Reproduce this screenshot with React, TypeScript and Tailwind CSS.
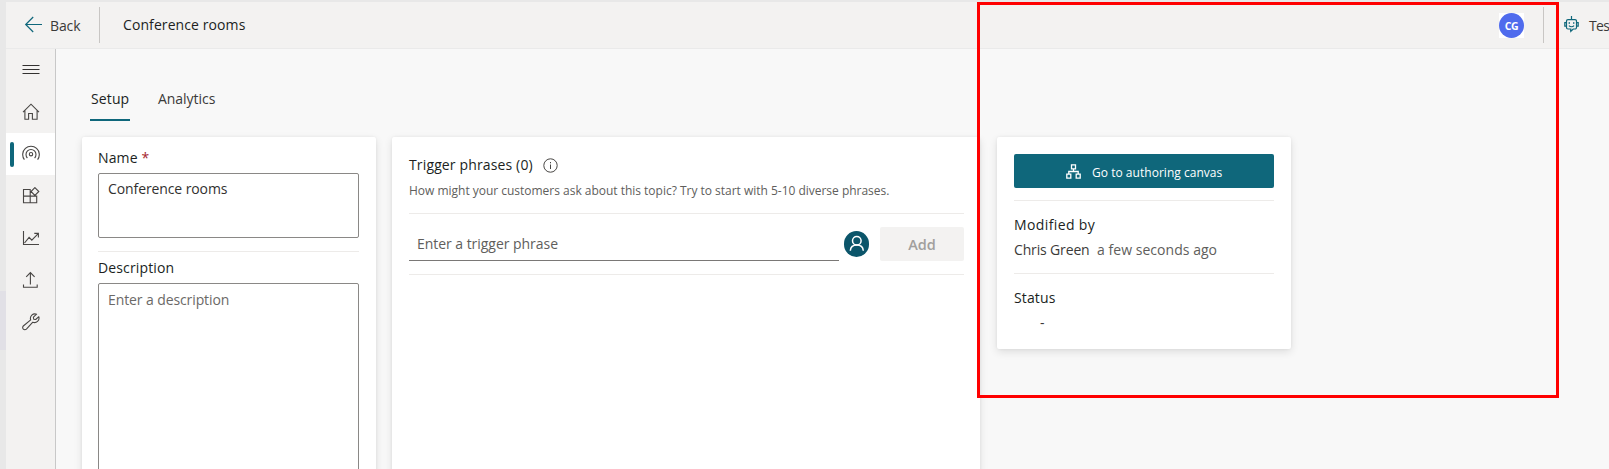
import React from "react";

type IconProps = { children: React.ReactNode };

function NavIcon({ children }: IconProps) {
  return (
    <svg width="18" height="18" viewBox="0 0 18 18" fill="none" stroke="#484644" strokeWidth="1.1">
      {children}
    </svg>
  );
}

const navIcons: { name: string; icon: React.ReactNode }[] = [
  { name: "menu", icon: <path d="M.5 4.5h17M.5 8.5h17M.5 12.5h17" stroke="#323130" /> },
  { name: "home", icon: <path d="M1 9.2 9 1.2l8 8M2.9 7.4v8.8h3.7v-5.7h3.8v5.7h4.7V7.4" /> },
  {
    name: "topics",
    icon: (
      <>
        <circle cx="9" cy="9.2" r="1.7" />
        <path d="M5.4 13a5 5 0 1 1 7.2 0M2.4 14.6a8.3 8.3 0 1 1 13.2 0" />
      </>
    ),
  },
  {
    name: "entities",
    icon: <path d="M1.5 2.5h6.7v13.2H1.5zM1.5 9.1h13.2v6.6H8.2V9.1M12.9.6l3.9 3.9-3.9 3.9L9 4.5z" />,
  },
  { name: "analytics", icon: <path d="M1.5 2v13.5H17M2.5 14l4.6-5.6 2.7 2.8 6.4-6.5M12.3 4.4h4.1v4.1" /> },
  { name: "publish", icon: <path d="M1.5 13.5v2.8h13.7v-2.8M8.4 13.6V1.5M4.2 5.8l4.2-4.3 4.2 4.3" /> },
  {
    name: "manage",
    icon: (
      <path
        d="M14.6 1.2a4.5 4.5 0 0 0-5.9 5.7L1.3 13a2.1 2.1 0 0 0 3.1 3.1l6.4-6.9a4.5 4.5 0 0 0 6-5.5l-3.1 2.8-2-.3-.3-2z"
        strokeLinejoin="round"
      />
    ),
  },
];

function Divider({ className }: { className: string }) {
  return <div className={`h-px shrink-0 bg-[#edebe9] ${className}`} />;
}

const card = "rounded-[2px] bg-white shadow-[0_3px_8px_rgba(0,0,0,0.11),0_0_3px_rgba(0,0,0,0.06)]";
const heading = "text-sm/5 font-medium tracking-[0.14px] text-[#201f1e]";

export default function App() {
  return (
    <div className="relative flex h-[469px] w-[1609px] overflow-hidden bg-[#e8e8e8] pt-[2px] font-['Open_Sans','Noto_Sans',sans-serif] text-sm/5 tracking-[-0.04px] whitespace-nowrap text-[#3b3a39]">
      <div className="flex w-1.5 shrink-0 flex-col">
        <div className="mt-[289px] h-[59px] bg-[#e1e0e6]" />
      </div>

      <div className="flex min-w-0 flex-1 flex-col bg-[#f8f8f8]">
        <header className="flex h-[47px] shrink-0 items-start border-b border-[#eaeaea] bg-[#f3f2f1]">
          <svg className="mt-[14px] ml-[18px]" width="18" height="17" viewBox="0 0 18 17" fill="none" stroke="#0f677b" strokeWidth="1.2">
            <path d="M18 8.5H1.5M9.2 1 1.7 8.5 9.2 16" />
          </svg>
          <span className="mt-[14px] ml-2 w-[49px] tracking-[-0.1px]">Back</span>
          <div className="mt-[5px] h-9 w-px bg-[#c8c6c4]" />
          <span className="mt-[13px] ml-[23px] font-medium tracking-[0.09px] text-[#201f1e]">Conference rooms</span>
          <div className="mt-[11px] ml-auto flex size-[25px] items-center justify-center bg-white">
            <div className="flex size-[25px] items-center justify-center rounded-full bg-[#4f6bed] text-[10.5px] font-bold tracking-[-0.3px] text-white">CG</div>
          </div>
          <div className="mt-[5px] ml-[19px] h-9 w-px bg-[#c8c6c4]" />
          <svg className="mt-[14px] ml-5" width="15" height="17" viewBox="0 0 15 17" fill="none" stroke="#0f677b" strokeWidth="1.2">
            <path d="M7.5 0v3.5M4 3.6h7a1.5 1.5 0 0 1 1.5 1.5v6.4A1.5 1.5 0 0 1 11 13H9.2l-2.4 2.4V13H4a1.5 1.5 0 0 1-1.5-1.5V5.1A1.5 1.5 0 0 1 4 3.6zM2.5 6.7H.8v3.4h1.7M12.5 6.7h1.7v3.4h-1.7M4.9 9.7c1.4 1.4 3.8 1.4 5.2 0" />
            <path d="M5.3 6.2v1.6M9.7 6.2v1.6" strokeWidth="1.4" />
          </svg>
          <span className="mt-[14px] ml-2.5 w-5 tracking-[-0.6px]">Tes</span>
        </header>

        <div className="flex min-h-0 flex-1">
          <nav className="flex w-[50px] shrink-0 flex-col border-r border-[#c8c8c8] bg-[#f3f2f1]">
            {navIcons.map(({ name, icon }) => (
              <div key={name} className={`flex h-[42px] items-center ${name === "topics" ? "bg-white" : ""}`}>
                <div className={`ml-1 h-[25px] w-1 rounded-[2px] ${name === "topics" ? "bg-[#0f677b]" : ""}`} />
                <div className="ml-[8.4px]">
                  <NavIcon>{icon}</NavIcon>
                </div>
              </div>
            ))}
          </nav>

          <main className="min-w-0 flex-1 pt-10 pl-[26px]">
            <div className="ml-2 flex gap-7">
              <div className="w-10 border-b-2 border-[#0f677b] pb-2.5 pl-px font-medium tracking-[0.12px] text-[#201f1e]">Setup</div>
              <div>Analytics</div>
            </div>

            <div className="mt-4 flex items-start">
              <section className={`flex h-[360px] w-[294px] shrink-0 flex-col px-4 pt-[11px] ${card}`}>
                <div className={heading}>
                  Name <span className="font-normal text-[#a4262c]">*</span>
                </div>
                <div className="mt-[5px] h-[65px] w-[261px] rounded-[2px] border border-[#8a8886] pt-[5px] pl-[9px] tracking-[-0.1px] text-[#323130]">
                  Conference rooms
                </div>
                <Divider className="mt-[13px] w-[261px]" />
                <div className={`mt-1.5 ${heading}`}>Description</div>
                <div className="mt-[5px] w-[261px] flex-1 rounded-[2px] border border-[#8a8886] pt-1.5 pl-[9px] tracking-[-0.1px] text-[#6b6967]">
                  Enter a description
                </div>
              </section>

              <section className={`ml-4 h-[360px] w-[588px] shrink-0 pt-[18px] pr-4 pl-[17px] ${card}`}>
                <div className={`flex items-center ${heading}`}>
                  <span className="w-[134px]">Trigger phrases (0)</span>
                  <svg width="15" height="15" viewBox="0 0 15 15" fill="none" stroke="#484644">
                    <circle cx="7.5" cy="7.5" r="6.7" />
                    <path d="M7.5 6.5V11M7.5 4v1.3" />
                  </svg>
                </div>
                <div className="mt-2 text-xs/4 tracking-[-0.015px] text-[#605e5c]">
                  How might your customers ask about this topic? Try to start with 5-10 diverse phrases.
                </div>
                <Divider className="mt-3.5" />
                <div className="mt-[13px] flex h-[34px] items-center">
                  <div className="flex h-[34px] w-[430px] items-center border-b border-[#7a7876] pl-2 text-[#605e5c]">
                    Enter a trigger phrase
                  </div>
                  <svg className="ml-[5px]" width="25" height="26" viewBox="0 0 25 26" fill="none">
                    <rect width="25" height="26" rx="12.5" fill="#0b556a" />
                    <circle cx="12.8" cy="9.8" r="4.3" stroke="#fff" strokeWidth="1.5" />
                    <path d="M6.3 19.8c.3-3.5 3-5.7 6.5-5.7s6.2 2.2 6.5 5.7" stroke="#fff" strokeWidth="1.5" />
                  </svg>
                  <div className="ml-[11px] flex h-[34px] w-[84px] items-center justify-center rounded-[2px] bg-[#f3f2f1] pt-px text-[14.5px] font-semibold text-[#a19f9d]">
                    Add
                  </div>
                </div>
                <Divider className="mt-[13px]" />
              </section>

              <section className={`ml-[17px] h-[212px] w-[294px] shrink-0 px-[17px] pt-[17px] ${card}`}>
                <div className="flex h-[34px] items-center rounded-[2px] bg-[#0f677b] pl-[52px] text-xs font-medium tracking-[0.03px] text-white">
                  <svg width="15" height="15" viewBox="0 0 15 15" fill="none" stroke="#fff" strokeWidth="1.3">
                    <path d="M5.5.8h4v4h-4zM.8 10.2h4v4h-4zM10.2 10.2h4v4h-4zM7.5 4.8v2.7M2.8 10.2V7.5h9.4v2.7" />
                  </svg>
                  <span className="ml-[11px] pt-[3px]">Go to authoring canvas</span>
                </div>
                <Divider className="mt-3" />
                <div className="mt-3.5 font-medium tracking-[0.38px] text-[#201f1e]">Modified by</div>
                <div className="mt-[5px] flex">
                  <span className="w-[83px] tracking-[-0.15px]">Chris Green</span>
                  <span className="tracking-[0.04px] text-[#605e5c]">a few seconds ago</span>
                </div>
                <Divider className="mt-[13px]" />
                <div className={`mt-3.5 ${heading}`}>Status</div>
                <div className="mt-[5px] pl-[26px]">-</div>
              </section>
            </div>
          </main>
        </div>
      </div>

      <div className="pointer-events-none absolute top-[2px] left-[977px] h-[396px] w-[582px] border-[3px] border-[#ff0000]" />
    </div>
  );
}
